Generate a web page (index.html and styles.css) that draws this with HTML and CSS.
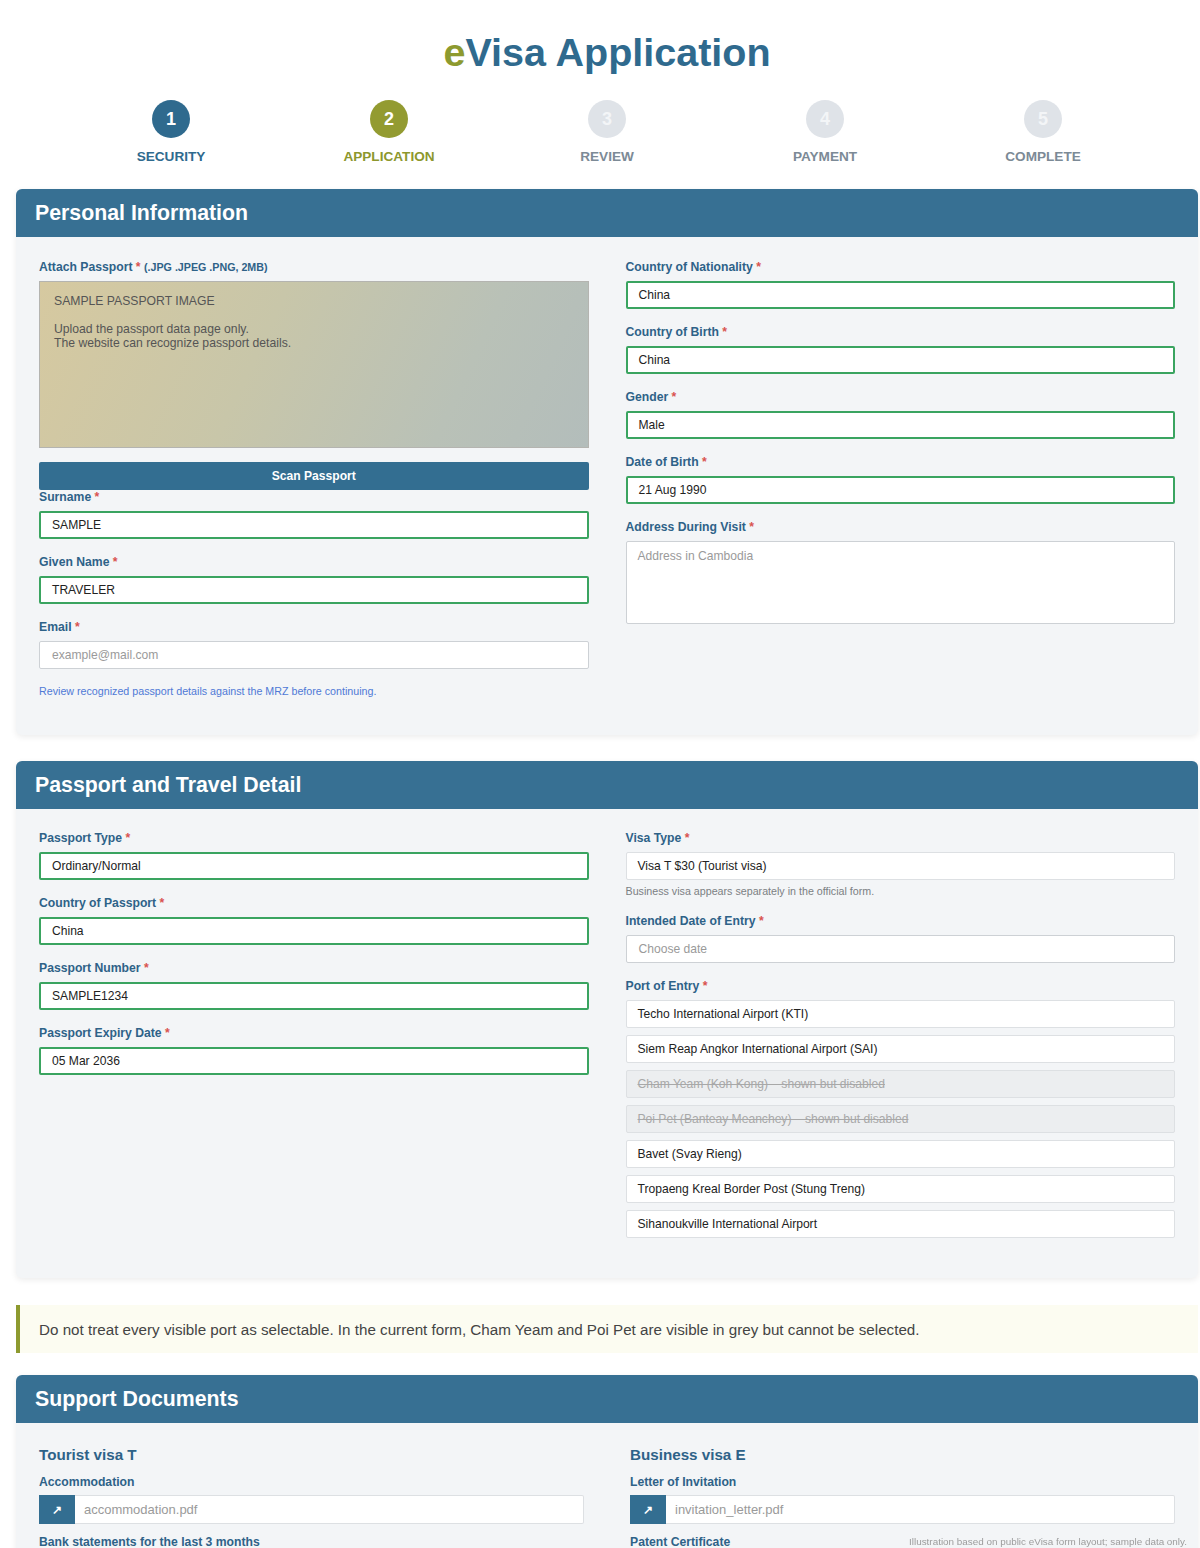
FILE: index.html
```html
<!DOCTYPE html>
<html lang="en">
<head>
<meta charset="utf-8">
<title>eVisa Application</title>
<link rel="stylesheet" href="styles.css">
</head>
<body>
<div class="page">
  <h1 class="title"><span class="title-e">e</span>Visa Application</h1>

  <ol class="stepper">
    <li class="step step-done"><span class="step-dot">1</span><span class="step-label">SECURITY</span></li>
    <li class="step step-active"><span class="step-dot">2</span><span class="step-label">APPLICATION</span></li>
    <li class="step"><span class="step-dot">3</span><span class="step-label">REVIEW</span></li>
    <li class="step"><span class="step-dot">4</span><span class="step-label">PAYMENT</span></li>
    <li class="step"><span class="step-dot">5</span><span class="step-label">COMPLETE</span></li>
  </ol>

  <section class="card">
    <header class="card-head"><h2>Personal Information</h2></header>
    <div class="card-body grid2">
      <div class="col">
        <div class="field-attach">
          <div class="lbl">Attach Passport <span class="req">*</span> <span class="lbl-small">(.JPG .JPEG .PNG, 2MB)</span></div>
          <div class="passport-img">
            <p class="pi-title">SAMPLE PASSPORT IMAGE</p>
            <p class="pi-text">Upload the passport data page only.<br>The website can recognize passport details.</p>
          </div>
          <div class="btn-scan">Scan Passport</div>
        </div>
        <div class="field">
          <div class="lbl">Surname <span class="req">*</span></div>
          <div class="input ok">SAMPLE</div>
        </div>
        <div class="field">
          <div class="lbl">Given Name <span class="req">*</span></div>
          <div class="input ok">TRAVELER</div>
        </div>
        <div class="field">
          <div class="lbl">Email <span class="req">*</span></div>
          <div class="input plain placeholder">example@mail.com</div>
        </div>
        <p class="hint-blue">Review recognized passport details against the MRZ before continuing.</p>
      </div>
      <div class="col">
        <div class="field">
          <div class="lbl">Country of Nationality <span class="req">*</span></div>
          <div class="input ok">China</div>
        </div>
        <div class="field">
          <div class="lbl">Country of Birth <span class="req">*</span></div>
          <div class="input ok">China</div>
        </div>
        <div class="field">
          <div class="lbl">Gender <span class="req">*</span></div>
          <div class="input ok">Male</div>
        </div>
        <div class="field">
          <div class="lbl">Date of Birth <span class="req">*</span></div>
          <div class="input ok">21 Aug 1990</div>
        </div>
        <div class="field">
          <div class="lbl">Address During Visit <span class="req">*</span></div>
          <div class="textarea placeholder">Address in Cambodia</div>
        </div>
      </div>
    </div>
  </section>

  <section class="card">
    <header class="card-head"><h2>Passport and Travel Detail</h2></header>
    <div class="card-body card-body-tight grid2">
      <div class="col">
        <div class="field">
          <div class="lbl">Passport Type <span class="req">*</span></div>
          <div class="input ok">Ordinary/Normal</div>
        </div>
        <div class="field">
          <div class="lbl">Country of Passport <span class="req">*</span></div>
          <div class="input ok">China</div>
        </div>
        <div class="field">
          <div class="lbl">Passport Number <span class="req">*</span></div>
          <div class="input ok">SAMPLE1234</div>
        </div>
        <div class="field">
          <div class="lbl">Passport Expiry Date <span class="req">*</span></div>
          <div class="input ok">05 Mar 2036</div>
        </div>
      </div>
      <div class="col">
        <div class="field">
          <div class="lbl">Visa Type <span class="req">*</span></div>
          <div class="input light">Visa T $30 (Tourist visa)</div>
          <p class="hint-grey">Business visa appears separately in the official form.</p>
        </div>
        <div class="field">
          <div class="lbl">Intended Date of Entry <span class="req">*</span></div>
          <div class="input plain placeholder">Choose date</div>
        </div>
        <div class="field">
          <div class="lbl">Port of Entry <span class="req">*</span></div>
          <div class="ports">
            <div class="input light">Techo International Airport (KTI)</div>
            <div class="input light">Siem Reap Angkor International Airport (SAI)</div>
            <div class="input light disabled">Cham Yeam (Koh Kong) – shown but disabled</div>
            <div class="input light disabled">Poi Pet (Banteay Meanchey) – shown but disabled</div>
            <div class="input light">Bavet (Svay Rieng)</div>
            <div class="input light">Tropaeng Kreal Border Post (Stung Treng)</div>
            <div class="input light">Sihanoukville International Airport</div>
          </div>
        </div>
      </div>
    </div>
  </section>

  <div class="notice">Do not treat every visible port as selectable. In the current form, Cham Yeam and Poi Pet are visible in grey but cannot be selected.</div>

  <section class="card">
    <header class="card-head"><h2>Support Documents</h2></header>
    <div class="card-body grid2 grid-docs">
      <div class="col">
        <h3 class="doc-title">Tourist visa T</h3>
        <div class="doc-field">
          <div class="lbl">Accommodation</div>
          <div class="file"><span class="file-btn">↗</span><span class="file-name">accommodation.pdf</span></div>
        </div>
        <div class="doc-field">
          <div class="lbl">Bank statements for the last 3 months</div>
        </div>
      </div>
      <div class="col">
        <h3 class="doc-title">Business visa E</h3>
        <div class="doc-field">
          <div class="lbl">Letter of Invitation</div>
          <div class="file"><span class="file-btn">↗</span><span class="file-name">invitation_letter.pdf</span></div>
        </div>
        <div class="doc-field">
          <div class="lbl">Patent Certificate</div>
        </div>
      </div>
    </div>
  </section>
</div>
<p class="footnote">Illustration based on public eVisa form layout; sample data only.</p>
</body>
</html>
```

FILE: styles.css
```css
* { box-sizing: border-box; }

html, body {
  margin: 0;
  padding: 0;
  background: #ffffff;
  font-family: "Liberation Sans", Arial, sans-serif;
  color: #222;
}

.page {
  width: 1182px;
  margin-left: 16px;
  padding-top: 29px;
}

.title {
  margin: 0;
  text-align: center;
  font-size: 39.5px;
  line-height: 46px;
  font-weight: 700;
  color: #2f6a8e;
}
.title-e { color: #8d9a2f; }

.stepper {
  list-style: none;
  margin: 25px auto 0;
  padding: 0;
  width: 1090px;
  display: grid;
  grid-template-columns: repeat(5, 1fr);
}
.step {
  display: flex;
  flex-direction: column;
  align-items: center;
}
.step-dot {
  width: 38px;
  height: 38px;
  border-radius: 50%;
  background: #dfe3e8;
  color: #f3f5f7;
  font-size: 18px;
  font-weight: 700;
  display: flex;
  align-items: center;
  justify-content: center;
}
.step-label {
  margin-top: 11px;
  font-size: 13.6px;
  line-height: 16px;
  font-weight: 700;
  color: #7c8a96;
}
.step-done .step-dot { background: #2f6a8e; color: #fff; }
.step-done .step-label { color: #2f6a8e; }
.step-active .step-dot { background: #939b31; color: #fff; }
.step-active .step-label { color: #8d972d; }

.card {
  margin-top: 24px;
  margin-bottom: 26px;
  background: #f3f5f7;
  border-radius: 6px;
  box-shadow: 0 2px 6px rgba(0, 0, 0, 0.08);
  overflow: hidden;
}
.card-head {
  background: #377093;
  height: 48px;
  padding: 0 19px;
  display: flex;
  align-items: center;
}
.card-head h2 {
  margin: 0;
  color: #fff;
  font-size: 21.3px;
  font-weight: 700;
}
.card-body {
  padding: 23px 23px 24px;
}
.card-body-tight { padding-top: 22px; }
.grid2 {
  display: grid;
  grid-template-columns: 1fr 1fr;
  column-gap: 37px;
  align-items: start;
}
.grid-docs { column-gap: 46px; }

.lbl {
  font-size: 12.2px;
  line-height: 15px;
  font-weight: 700;
  color: #2e6288;
  margin-bottom: 6px;
}
.lbl-small { font-size: 10.7px; }
.req { color: #d9534f; }

.field { margin-bottom: 16px; }

.input {
  height: 28px;
  padding: 0 11px;
  display: flex;
  align-items: center;
  font-size: 12.1px;
  color: #222;
  background: #fff;
  border-radius: 2px;
  white-space: nowrap;
}
.input.ok { border: 2px solid #3aa460; }
.input.plain { border: 1px solid #cdd1d5; padding-left: 12px; }
.input.light { border: 1px solid #dde0e3; padding-left: 11px; }
.placeholder { color: #9a9a9a; }
.input.disabled {
  background: #eceef0;
  color: #a8a8a8;
  text-decoration: line-through;
}

.textarea {
  height: 83px;
  border: 1px solid #cdd1d5;
  background: #fff;
  border-radius: 2px;
  padding: 7px 11px;
  font-size: 12.1px;
}

.passport-img {
  height: 167px;
  border: 1px solid #b4b4b0;
  background: linear-gradient(115deg, #d6c9a0 0%, #c8c6a9 40%, #b9c1b7 75%, #b3bdbb 100%);
  padding: 12px 14px;
  color: #555;
  font-size: 12.2px;
  margin-bottom: 14px;
}
.pi-title { margin: 0 0 13px; line-height: 15px; }
.pi-text { margin: 0; line-height: 14px; }

.btn-scan {
  height: 28px;
  background: #336e91;
  color: #fff;
  border-radius: 2px;
  font-size: 12.1px;
  font-weight: 700;
  display: flex;
  align-items: center;
  justify-content: center;
}

.hint-blue {
  margin: 1px 0 13px;
  font-size: 10.7px;
  line-height: 13px;
  color: #4f79d6;
}
.hint-grey {
  margin: 5px 0 0;
  font-size: 10.7px;
  line-height: 13px;
  color: #7b7f83;
}

.ports {
  display: flex;
  flex-direction: column;
  gap: 7px;
}

.notice {
  margin-top: 27px;
  margin-bottom: 22px;
  height: 48px;
  border-left: 4px solid #8d9a2f;
  background: #fcfcf1;
  padding-left: 19px;
  display: flex;
  align-items: center;
  font-size: 15.2px;
  color: #444;
}
.notice + .card { margin-top: 0; }

.doc-title {
  margin: 0 0 11px;
  font-size: 15.2px;
  line-height: 18px;
  font-weight: 700;
  color: #2e6288;
}
.doc-field { margin-bottom: 11px; }
.doc-field .lbl { margin-bottom: 5px; }
.file {
  height: 29px;
  display: flex;
  background: #fff;
  border: 1px solid #dde0e3;
  border-left: none;
  border-radius: 2px;
}
.file-btn {
  width: 36px;
  margin-top: -1px;
  margin-bottom: -1px;
  background: #336e91;
  color: #fff;
  font-size: 12px;
  font-weight: 700;
  display: flex;
  align-items: center;
  justify-content: center;
}
.file-name {
  padding-left: 9px;
  display: flex;
  align-items: center;
  font-size: 13px;
  color: #9a9a9a;
}

.footnote {
  position: fixed;
  right: 13px;
  bottom: 0;
  margin: 0;
  font-size: 9.9px;
  line-height: 12px;
  color: #9c9c9c;
}
```
